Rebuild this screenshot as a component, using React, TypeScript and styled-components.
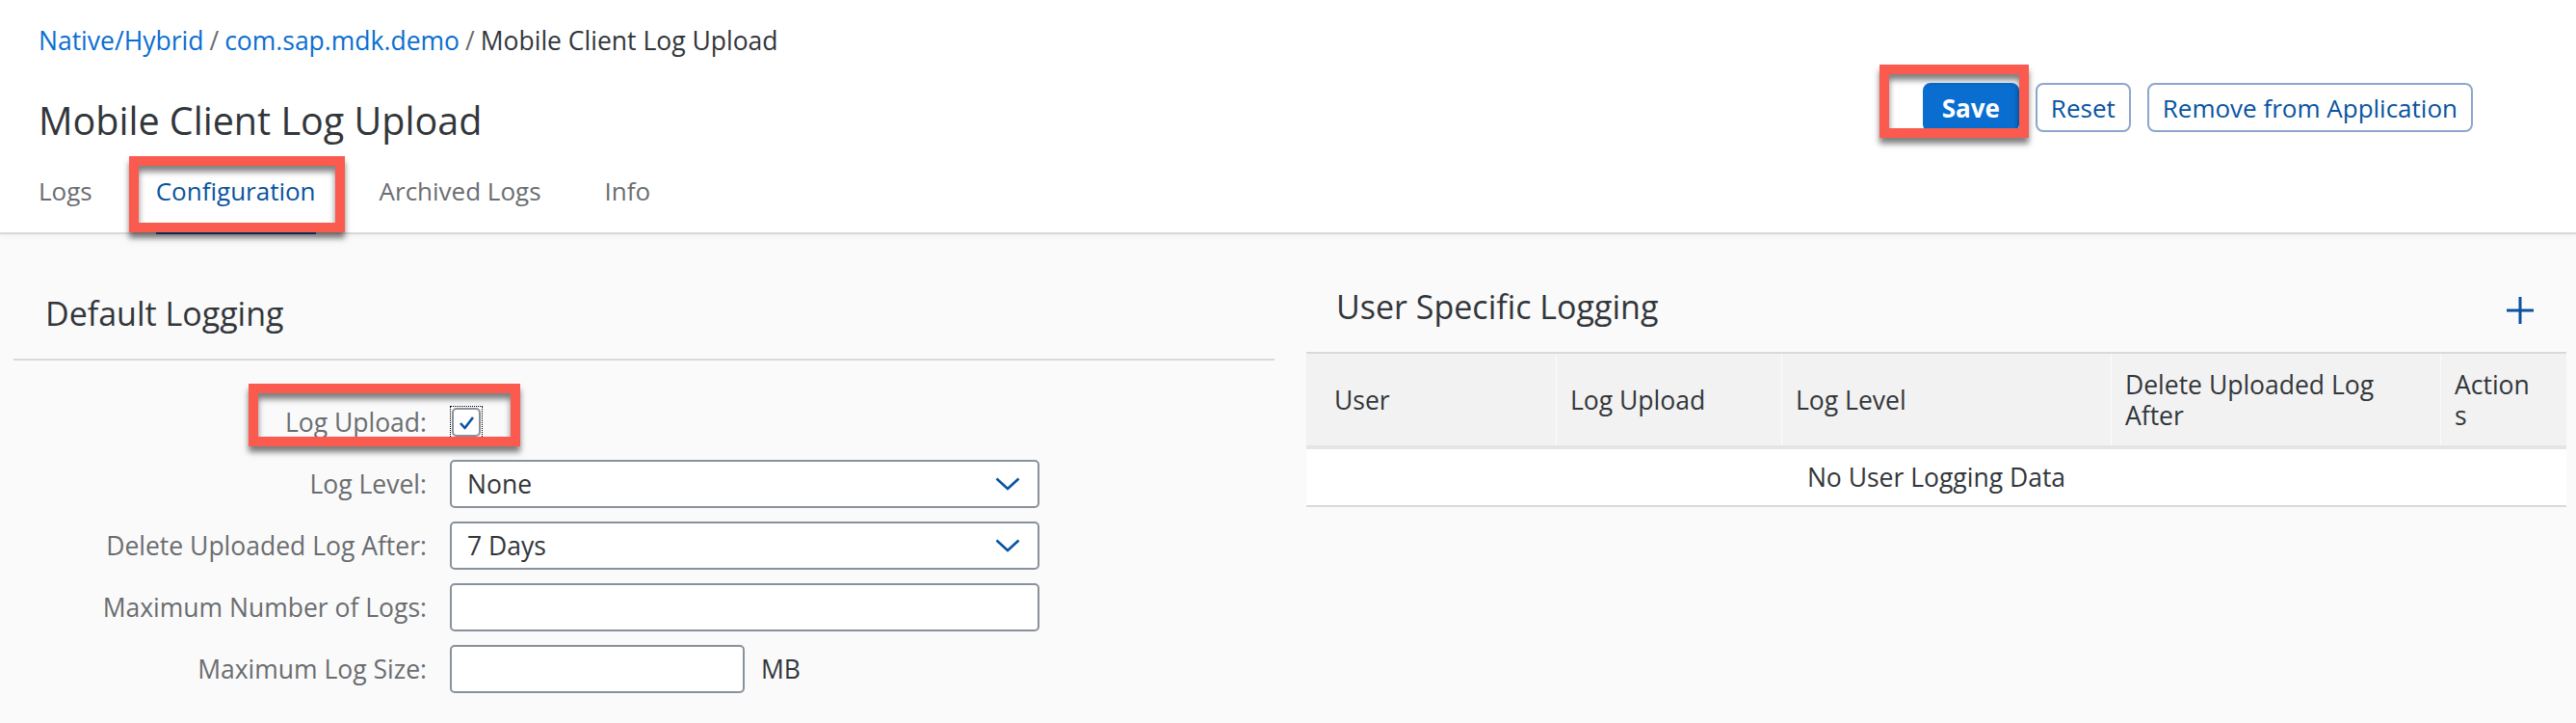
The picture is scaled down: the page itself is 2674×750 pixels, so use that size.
import React from 'react'
import styled, { createGlobalStyle } from 'styled-components'

const GlobalStyle = createGlobalStyle`
  * { box-sizing: border-box; }
  html, body {
    margin: 0;
    padding: 0;
    background: #fafafa;
  }
  body {
    font-family: 'Open Sans', 'Noto Sans', sans-serif;
    color: #32363a;
  }
`

const BLUE = '#0854a0'

type MarkProps = { $top: number; $left: number; $width: number; $height: number }

// red annotation frame drawn over the screenshot
const Mark = styled.span<MarkProps>`
  position: absolute;
  top: ${(p) => p.$top}px;
  left: ${(p) => p.$left}px;
  width: ${(p) => p.$width}px;
  height: ${(p) => p.$height}px;
  border: 10px solid #fb5a4e;
  box-shadow: 0 6px 6px rgba(0, 0, 0, 0.5), inset 0 6px 6px rgba(0, 0, 0, 0.5);
  pointer-events: none;
`

const Page = styled.div`
  width: 2674px;
  min-height: 750px;
  background: #fafafa;
`

const Header = styled.header`
  background: #fff;
  padding: 0 107px 0 40px;
  border-bottom: 2px solid #d9d9d9;
  box-shadow: 0 2px 5px rgba(0, 0, 0, 0.05);
`

const HeaderTop = styled.div`
  display: flex;
  justify-content: space-between;
  align-items: flex-start;
`

const TitleBlock = styled.div`
  display: flex;
  flex-direction: column;
`

const Breadcrumbs = styled.nav`
  padding-top: 24px;
  font-size: 26.5px;
  line-height: 37px;
  color: #32363a;
`

const Crumb = styled.span`
  color: #0a6ed1;
`

const Sep = styled.span`
  color: #6a6d70;
  padding: 0 6px;
`

const Title = styled.h1`
  margin: 38px 0 0;
  font-size: 39.5px;
  line-height: 52px;
  font-weight: 400;
  color: #32363a;
`

const Actions = styled.div`
  display: flex;
  gap: 17px;
  margin-top: 86px;
`

const Anchor = styled.span`
  position: relative;
  display: inline-flex;
`

const Button = styled.button<{ $primary?: boolean }>`
  height: 51px;
  padding: 0 ${(p) => (p.$primary ? 18 : 14)}px;
  border-radius: 8px;
  border: 2px solid ${(p) => (p.$primary ? '#0a6ed1' : '#8ca7cc')};
  background: ${(p) => (p.$primary ? '#0a6ed1' : '#fff')};
  color: ${(p) => (p.$primary ? '#fff' : BLUE)};
  font-family: inherit;
  font-size: 26px;
  font-weight: ${(p) => (p.$primary ? 700 : 400)};
  cursor: pointer;
`

const TabBar = styled.div`
  display: flex;
  gap: 66px;
  margin-top: 29px;
`

const Tab = styled.div<{ $active?: boolean }>`
  position: relative;
  font-size: 26px;
  line-height: 36px;
  padding-bottom: 24px;
  margin-bottom: -2px;
  border-bottom: 3px solid ${(p) => (p.$active ? BLUE : 'transparent')};
  color: ${(p) => (p.$active ? BLUE : '#6a6d70')};
`

const Content = styled.main`
  display: flex;
  gap: 33px;
  padding: 0 10px 0 14px;
`

const LeftPanel = styled.section`
  flex: 0 0 1309px;
`

const RightPanel = styled.section`
  flex: 1;
`

const PanelTitle = styled.h2`
  margin: 0;
  font-size: 34px;
  line-height: 46px;
  font-weight: 400;
  color: #32363a;
`

const LeftHeader = styled.div`
  padding: 59px 0 24px 33px;
  border-bottom: 2px solid #d9d9d9;
`

const Form = styled.div`
  display: flex;
  flex-direction: column;
  gap: 14px;
  padding-top: 39px;
`

const FormRow = styled.div`
  position: relative;
  display: grid;
  grid-template-columns: 429px auto;
  column-gap: 24px;
  align-items: center;
  height: 50px;
`

const Label = styled.label`
  text-align: right;
  font-size: 26.5px;
  line-height: 32px;
  color: #6a6d70;
`

const Field = styled.div`
  display: flex;
  align-items: center;
  gap: 17px;
`

const FocusRing = styled.span`
  display: inline-flex;
  padding: 1px;
  border: 1px dotted #000;
`

const CheckBox = styled.span`
  display: flex;
  align-items: center;
  justify-content: center;
  width: 30px;
  height: 30px;
  border: 2px solid #89919a;
  border-radius: 5px;
  background: #fff;
`

const InputBox = styled.div<{ $width: number }>`
  display: flex;
  align-items: center;
  justify-content: space-between;
  width: ${(p) => p.$width}px;
  height: 50px;
  padding: 0 18px 0 16px;
  border: 2px solid #89919a;
  border-radius: 5px;
  background: #fff;
  font-size: 26.5px;
  color: #32363a;
`

const Unit = styled.span`
  font-size: 26.5px;
  color: #32363a;
`

const RightHeader = styled.div`
  display: flex;
  justify-content: space-between;
  align-items: center;
  padding: 52px 34px 0 31px;
  margin-bottom: 24px;
`

const AddIcon = styled.svg`
  margin-top: 8px;
`

const COLS = '259px 234px 342px 342px 1fr'

const TableHead = styled.div`
  display: grid;
  grid-template-columns: ${COLS};
  height: 101px;
  background: #f2f2f2;
  border-top: 2px solid #d9d9d9;
  border-bottom: 4px solid #e5e5e5;
`

const HeadCell = styled.div<{ $first?: boolean; $last?: boolean }>`
  display: flex;
  align-items: center;
  padding: 0 ${(p) => (p.$last ? 33 : 14)}px 0 ${(p) => (p.$first ? 29 : 14)}px;
  border-left: ${(p) => (p.$first ? 'none' : '1px solid #fbfbfb')};
  font-size: 26.5px;
  line-height: 32px;
  color: #32363a;
  overflow-wrap: anywhere;
`

const EmptyRow = styled.div`
  display: flex;
  align-items: center;
  justify-content: center;
  height: 60px;
  background: #fff;
  border-bottom: 2px solid #d9d9d9;
  font-size: 26.5px;
  color: #32363a;
`

const Chevron = () => (
  <svg width="26" height="14" viewBox="0 0 26 14" fill="none">
    <polyline points="1.5,1.5 13,12 24.5,1.5" stroke={BLUE} strokeWidth="2.6" />
  </svg>
)

const Check = () => (
  <svg width="17" height="15" viewBox="0 0 17 15" fill="none">
    <polyline points="2,8 6.5,13 15,2" stroke={BLUE} strokeWidth="2.6" strokeLinejoin="round" />
  </svg>
)

const App: React.FC = () => {
  return (
    <Page>
      <GlobalStyle />
      <Header>
        <HeaderTop>
          <TitleBlock>
            <Breadcrumbs>
              <Crumb>Native/Hybrid</Crumb>
              <Sep>/</Sep>
              <Crumb>com.sap.mdk.demo</Crumb>
              <Sep>/</Sep>
              Mobile Client Log Upload
            </Breadcrumbs>
            <Title>Mobile Client Log Upload</Title>
          </TitleBlock>
          <Actions>
            <Anchor>
              <Button $primary>Save</Button>
              <Mark $top={-19} $left={-45} $width={155} $height={76} />
            </Anchor>
            <Button>Reset</Button>
            <Button>Remove from Application</Button>
          </Actions>
        </HeaderTop>
        <TabBar>
          <Tab>Logs</Tab>
          <Tab $active>
            Configuration
            <Mark $top={-18} $left={-28} $width={224} $height={79} />
          </Tab>
          <Tab>Archived Logs</Tab>
          <Tab>Info</Tab>
        </TabBar>
      </Header>

      <Content>
        <LeftPanel>
          <LeftHeader>
            <PanelTitle>Default Logging</PanelTitle>
          </LeftHeader>
          <Form>
            <FormRow>
              <Label>Log Upload:</Label>
              <Field>
                <FocusRing>
                  <CheckBox>
                    <Check />
                  </CheckBox>
                </FocusRing>
              </Field>
              <Mark $top={-15} $left={244} $width={282} $height={65} />
            </FormRow>
            <FormRow>
              <Label>Log Level:</Label>
              <Field>
                <InputBox $width={612}>
                  None
                  <Chevron />
                </InputBox>
              </Field>
            </FormRow>
            <FormRow>
              <Label>Delete Uploaded Log After:</Label>
              <Field>
                <InputBox $width={612}>
                  7 Days
                  <Chevron />
                </InputBox>
              </Field>
            </FormRow>
            <FormRow>
              <Label>Maximum Number of Logs:</Label>
              <Field>
                <InputBox $width={612} />
              </Field>
            </FormRow>
            <FormRow>
              <Label>Maximum Log Size:</Label>
              <Field>
                <InputBox $width={306} />
                <Unit>MB</Unit>
              </Field>
            </FormRow>
          </Form>
        </LeftPanel>

        <RightPanel>
          <RightHeader>
            <PanelTitle>User Specific Logging</PanelTitle>
            <AddIcon width="28" height="28" viewBox="0 0 28 28">
              <path d="M14 0v28M0 14h28" stroke={BLUE} strokeWidth="3" />
            </AddIcon>
          </RightHeader>
          <TableHead>
            <HeadCell $first>User</HeadCell>
            <HeadCell>Log Upload</HeadCell>
            <HeadCell>Log Level</HeadCell>
            <HeadCell>Delete Uploaded Log After</HeadCell>
            <HeadCell $last>Actions</HeadCell>
          </TableHead>
          <EmptyRow>No User Logging Data</EmptyRow>
        </RightPanel>
      </Content>
    </Page>
  )
}

export default App
